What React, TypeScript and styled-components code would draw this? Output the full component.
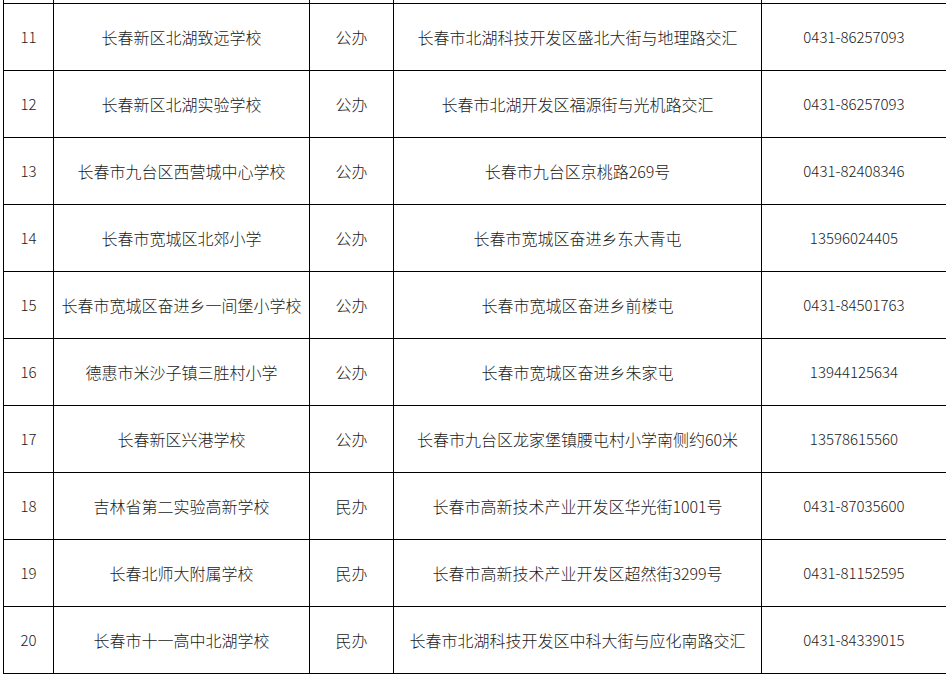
import React from "react";
import styled, { createGlobalStyle } from "styled-components";

const Global = createGlobalStyle`
  html, body { margin: 0; padding: 0; background: #ffffff; }
  body { font-family: "Noto Sans CJK SC", "Liberation Sans", sans-serif; color: #000; }
`;

const Page = styled.div`
  padding-left: 3px;
  width: 946px;
  height: 675px;
  overflow: hidden;
  box-sizing: border-box;
`;

const Table = styled.table`
  border-collapse: collapse;
  table-layout: fixed;
  width: 943px;
`;

const StubCell = styled.td`
  height: 3px;
  padding: 0;
  border-left: 1px solid #000;
  border-right: 1px solid #000;
  border-bottom: 1px solid #000;
  border-top: none;
`;

const Cell = styled.td`
  height: 66px;
  padding: 0 2px;
  border: 1px solid #000;
  text-align: center;
  vertical-align: middle;
  font-size: 16px;
  font-weight: 300;
  line-height: 20px;
  white-space: nowrap;
  color: #1a1a1a;
`;

const NumCell = styled(Cell)`
  font-size: 15px;
`;

type Row = [string, string, string, string, string];

const rows: Row[] = [
  ["11", "长春新区北湖致远学校", "公办", "长春市北湖科技开发区盛北大街与地理路交汇", "0431-86257093"],
  ["12", "长春新区北湖实验学校", "公办", "长春市北湖开发区福源街与光机路交汇", "0431-86257093"],
  ["13", "长春市九台区西营城中心学校", "公办", "长春市九台区京桃路269号", "0431-82408346"],
  ["14", "长春市宽城区北郊小学", "公办", "长春市宽城区奋进乡东大青屯", "13596024405"],
  ["15", "长春市宽城区奋进乡一间堡小学校", "公办", "长春市宽城区奋进乡前楼屯", "0431-84501763"],
  ["16", "德惠市米沙子镇三胜村小学", "公办", "长春市宽城区奋进乡朱家屯", "13944125634"],
  ["17", "长春新区兴港学校", "公办", "长春市九台区龙家堡镇腰屯村小学南侧约60米", "13578615560"],
  ["18", "吉林省第二实验高新学校", "民办", "长春市高新技术产业开发区华光街1001号", "0431-87035600"],
  ["19", "长春北师大附属学校", "民办", "长春市高新技术产业开发区超然街3299号", "0431-81152595"],
  ["20", "长春市十一高中北湖学校", "民办", "长春市北湖科技开发区中科大街与应化南路交汇", "0431-84339015"],
];

const widths = [50, 256, 84, 368, 185];

export default function App() {
  return (
    <Page>
      <Global />
      <Table>
        <colgroup>
          {widths.map((w, i) => (
            <col key={i} style={{ width: w }} />
          ))}
        </colgroup>
        <tbody>
          <tr>
            {widths.map((_, i) => (
              <StubCell key={i} />
            ))}
          </tr>
          {rows.map((r) => (
            <tr key={r[0]}>
              <NumCell>{r[0]}</NumCell>
              <Cell>{r[1]}</Cell>
              <Cell>{r[2]}</Cell>
              <Cell>{r[3]}</Cell>
              <NumCell>{r[4]}</NumCell>
            </tr>
          ))}
        </tbody>
      </Table>
    </Page>
  );
}
